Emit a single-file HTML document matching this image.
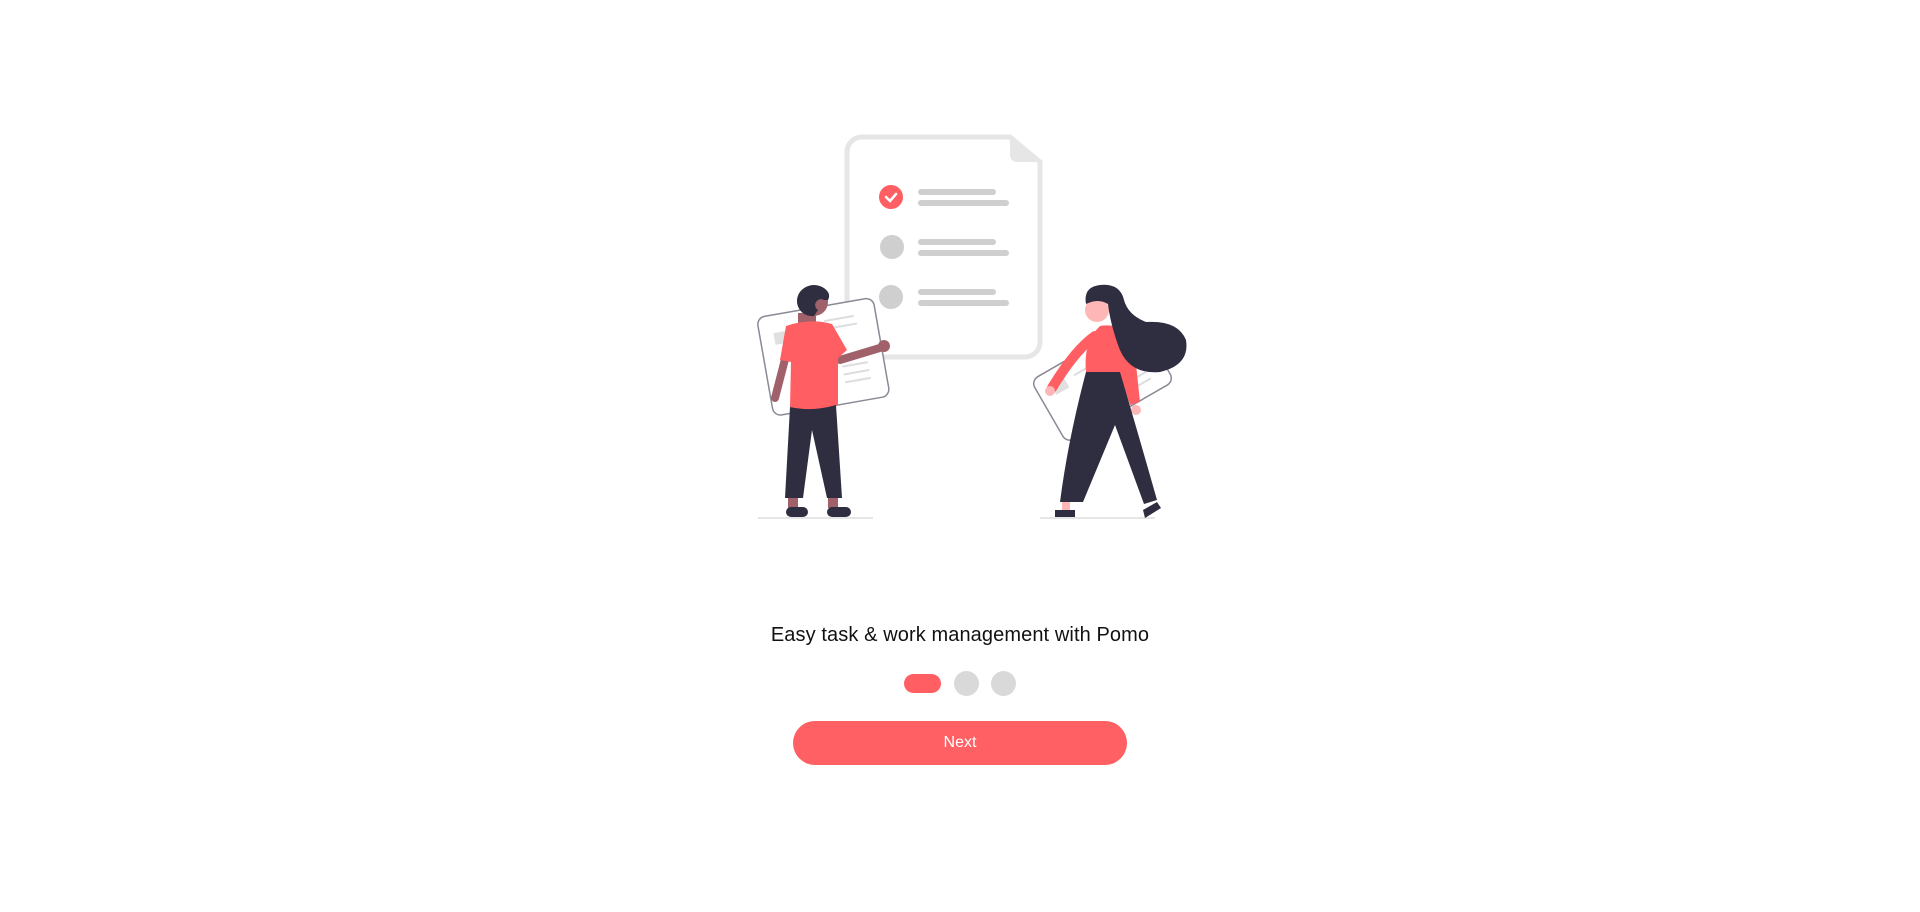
<!DOCTYPE html>
<html><head><meta charset="utf-8"><style>
html,body{margin:0;padding:0;background:#fff;width:1920px;height:912px;overflow:hidden;font-family:"Liberation Sans",sans-serif}
svg{position:absolute;left:0;top:0}
.t{position:absolute;left:0;width:1920px;top:624px;text-align:center;font-size:20px;color:#111;letter-spacing:0.1px}
.dot{position:absolute;top:671px;width:25px;height:25px;border-radius:50%;background:#d9d9d9}
.pill{position:absolute;left:904px;top:674px;width:37px;height:19px;border-radius:10px;background:#ff5f63}
.btn{position:absolute;left:793px;top:721px;width:334px;height:44px;border-radius:22px;background:#ff6064;color:#fff;font-size:16px;text-align:center;line-height:44px}
</style></head><body>
<svg width="1920" height="912" viewBox="0 0 1920 912">
 <path d="M862 137 H1010 L1040 162 V342 a15 15 0 0 1 -15 15 H862 a15 15 0 0 1 -15 -15 V152 a15 15 0 0 1 15 -15 Z" fill="#fff" stroke="#e6e6e6" stroke-width="5"/>
 <path d="M1010 137 V155 a7 7 0 0 0 7 7 H1040 Z" fill="#e6e6e6"/>
 <circle cx="891" cy="197" r="12" fill="#ff5f63"/>
 <path d="M886 197 l4 4 l6 -7" stroke="#fff" stroke-width="2.5" fill="none" stroke-linecap="round"/>
 <circle cx="892" cy="247" r="12" fill="#cfcfcf"/>
 <circle cx="891" cy="297" r="12" fill="#cfcfcf"/>
 <g stroke="#cfcfcf" stroke-width="6" stroke-linecap="round">
  <line x1="921" y1="192" x2="993" y2="192"/><line x1="921" y1="203" x2="1006" y2="203"/>
  <line x1="921" y1="242" x2="993" y2="242"/><line x1="921" y1="253" x2="1006" y2="253"/>
  <line x1="921" y1="292" x2="993" y2="292"/><line x1="921" y1="303" x2="1006" y2="303"/>
 </g>
 <line x1="758" y1="518" x2="873" y2="518" stroke="#e6e6e6" stroke-width="2"/>
 <line x1="1040" y1="518" x2="1155" y2="518" stroke="#e6e6e6" stroke-width="2"/>
 <g transform="rotate(-10 822 355)">
  <rect x="764" y="307" width="118" height="100" rx="8" fill="#fff" stroke="#8a8a96" stroke-width="1.5"/>
  <rect x="778" y="325" width="15" height="12" fill="#e0e0e0"/>
  <g stroke="#ddd" stroke-width="2"><line x1="830" y1="322" x2="860" y2="322"/><line x1="830" y1="330" x2="862" y2="330"/><line x1="840" y1="370" x2="866" y2="370"/><line x1="840" y1="378" x2="866" y2="378"/><line x1="840" y1="386" x2="866" y2="386"/></g>
 </g>
 <path d="M790 340 L775 398" stroke="#a0616a" stroke-width="8" stroke-linecap="round"/>
 <path d="M840 360 L883 347" stroke="#a0616a" stroke-width="8" stroke-linecap="round"/>
 <circle cx="884" cy="346" r="6" fill="#a0616a"/>
 <path d="M798 313 h18 v14 h-18z" fill="#a0616a"/>
 <circle cx="814" cy="302" r="14" fill="#a0616a"/>
 <path d="M797 300 a17 16 0 0 1 31 -8 a8 8 0 0 1 0 8 l-4 0 a4 4 0 0 0 -6 10 l-4 6 a15 15 0 0 1 -17 -16z" fill="#2f2e41"/>
 <path d="M786 326 Q810 318 832 324 L847 350 L838 358 V405 Q812 413 790 407 L791 362 L780 360 Z" fill="#ff5f63"/>
 <path d="M790 407 Q812 412 836 405 L842 498 H827 L812 430 L803 498 H785 Z" fill="#2f2e41"/>
 <rect x="788" y="498" width="10" height="10" fill="#a0616a"/><rect x="828" y="498" width="10" height="10" fill="#a0616a"/>
 <rect x="786" y="507" width="22" height="10" rx="5" fill="#2f2e41"/><rect x="827" y="507" width="24" height="10" rx="5" fill="#2f2e41"/>
 <g transform="rotate(-30 1102 380)">
  <rect x="1040" y="345" width="124" height="72" rx="8" fill="#fff" stroke="#8a8a96" stroke-width="1.5"/>
  <rect x="1055" y="360" width="15" height="10" fill="#e0e0e0"/>
  <g stroke="#ddd" stroke-width="2"><line x1="1080" y1="362" x2="1130" y2="362"/><line x1="1110" y1="395" x2="1145" y2="395"/><line x1="1110" y1="403" x2="1145" y2="403"/></g>
 </g>
 <circle cx="1097" cy="310" r="12" fill="#ffb6b6"/>
 <path d="M1095 336 Q1075 350 1052 388" stroke="#ff5f63" stroke-width="10" fill="none" stroke-linecap="round"/>
 <circle cx="1050" cy="391" r="5" fill="#ffb6b6"/>
 <path d="M1100 326 Q1125 322 1134 345 L1140 402 L1130 405 L1120 375 L1086 372 Q1083 342 1100 326z" fill="#ff5f63"/>
 <circle cx="1136" cy="410" r="5" fill="#ffb6b6"/>
 <path d="M1086 372 L1120 372 Q1140 440 1157 500 L1144 504 L1115 425 L1083 502 L1060 502 Q1068 440 1086 372z" fill="#2f2e41"/>
 <rect x="1062" y="502" width="8" height="8" fill="#ffb6b6"/>
 <path d="M1055 510 h20 v7 h-20z" fill="#2f2e41"/>
 <path d="M1143 510 l14 -8 l4 6 l-16 10z" fill="#2f2e41"/>
 <path d="M1086 304 Q1083 287 1100 285 Q1120 283 1124 300 Q1128 315 1146 322 Q1178 320 1186 340 Q1190 365 1160 372 Q1128 375 1118 345 Q1110 322 1108 304 Q1098 298 1086 304z" fill="#2f2e41"/>
</svg>
<div class="t">Easy task &amp; work management with Pomo</div>
<div class="pill"></div>
<div class="dot" style="left:954px"></div>
<div class="dot" style="left:991px"></div>
<div class="btn">Next</div>
</body></html>
